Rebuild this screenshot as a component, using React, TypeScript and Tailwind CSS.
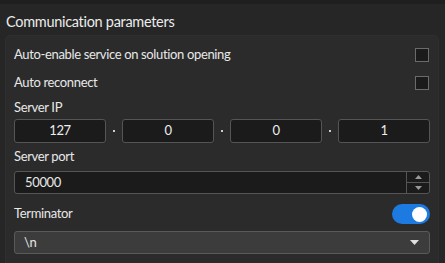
import React from 'react';

function Checkbox() {
  return <span className="w-[14px] h-[14px] border border-[#6b6b6b] bg-[#1b1b1b] shrink-0" />;
}

function IpBox({ value }: { value: string }) {
  return (
    <div className="flex-1 h-[24px] rounded-[3px] border border-[#555] bg-[#1b1b1b] flex items-center justify-center text-[13px] text-[#eee]">
      {value}
    </div>
  );
}

function Dot() {
  return <span className="w-[2px] h-[2px] bg-[#ccc] mx-[7px] shrink-0" />;
}

export default function App() {
  const ip = ['127', '0', '0', '1'];
  return (
    <div className="w-[445px] h-[263px] bg-[#262626] overflow-hidden text-[#e8e8e8] tracking-[-0.35px]"
         style={{ fontFamily: 'Lato, "Noto Sans", sans-serif' }}>
      <div className="h-[4px] bg-[#1f1f1f]" />
      <div className="pl-[6px] pt-[8px] text-[14.5px] leading-[20px] tracking-[-0.3px] text-[#ececec]">Communication parameters</div>

      <div className="mt-[3px] ml-[5px] mr-[6px] rounded-[5px] bg-[#2b2b2b] border border-[#2f2f2f] h-[260px] px-[8px] pt-[5px]">
        {/* Checkbox rows */}
        <div className="flex items-center justify-between h-[28px] pr-[1px]">
          <span className="text-[13px]">Auto-enable service on solution opening</span>
          <Checkbox />
        </div>
        <div className="flex items-center justify-between h-[28px] pr-[1px]">
          <span className="text-[13px]">Auto reconnect</span>
          <Checkbox />
        </div>

        {/* Server IP */}
        <div className="text-[13px] h-[22px] flex items-center">Server IP</div>
        <div className="flex items-center">
          {ip.map((v, i) => (
            <React.Fragment key={i}>
              {i > 0 && <Dot />}
              <IpBox value={v} />
            </React.Fragment>
          ))}
        </div>

        {/* Server port */}
        <div className="text-[13px] h-[28px] flex items-center">Server port</div>
        <div className="flex h-[23px] rounded-[3px] border border-[#555] bg-[#1b1b1b]">
          <div className="flex-1 flex items-center pl-[10px] text-[13px]">50000</div>
          <div className="w-[23px] border-l border-[#555] flex flex-col">
            <div className="flex-1 flex items-center justify-center border-b border-[#555]">
              <svg width="7" height="4" viewBox="0 0 7 4"><path d="M0 4 L3.5 0 L7 4 Z" fill="#9a9a9a" /></svg>
            </div>
            <div className="flex-1 flex items-center justify-center">
              <svg width="7" height="4" viewBox="0 0 7 4"><path d="M0 0 L3.5 4 L7 0 Z" fill="#9a9a9a" /></svg>
            </div>
          </div>
        </div>

        {/* Terminator */}
        <div className="flex items-center justify-between h-[37px] pt-[3px]">
          <span className="text-[13px]">Terminator</span>
          <span className="w-[38px] h-[20px] rounded-full bg-[#1c7ae0] flex items-center justify-end pr-[3px]">
            <span className="w-[15px] h-[15px] rounded-full bg-white" />
          </span>
        </div>
        <div className="flex items-center justify-between h-[23px] rounded-[3px] border border-[#5a5a5a] bg-[#3c3c3c] pl-[9px] pr-[10px]">
          <span className="text-[13px]">\n</span>
          <svg width="9" height="5" viewBox="0 0 9 5"><path d="M0 0 L4.5 5 L9 0 Z" fill="#e0e0e0" /></svg>
        </div>
      </div>
    </div>
  );
}
